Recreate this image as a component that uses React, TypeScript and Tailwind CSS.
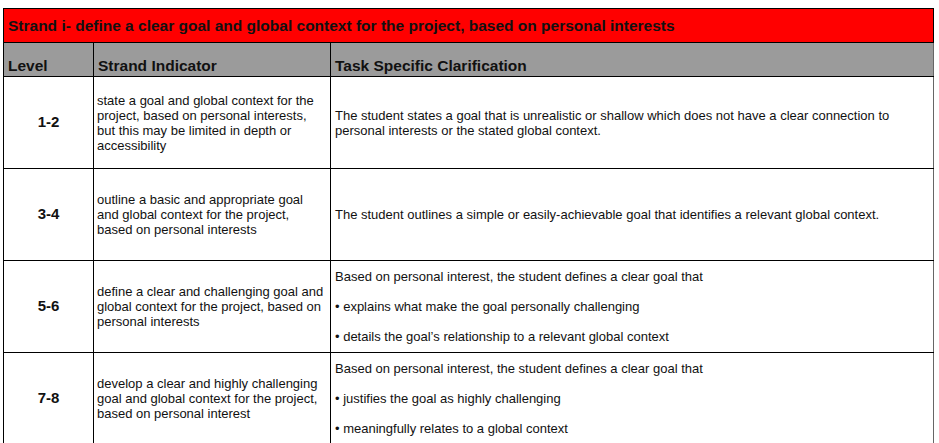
const rows = [
  {
    level: "1-2",
    indicator:
      "state a goal and global context for the project, based on personal interests, but this may be limited in depth or accessibility",
    clarification: [
      "The student states a goal that is unrealistic or shallow which does not have a clear connection to personal interests or the stated global context.",
    ],
  },
  {
    level: "3-4",
    indicator: "outline a basic and appropriate goal and global context for the project, based on personal interests",
    clarification: [
      "The student outlines a simple or easily-achievable goal that identifies a relevant global context.",
    ],
  },
  {
    level: "5-6",
    indicator: "define a clear and challenging goal and global context for the project, based on personal interests",
    clarification: [
      "Based on personal interest, the student defines a clear goal that",
      "• explains what make the goal personally challenging",
      "• details the goal’s relationship to a relevant global context",
    ],
  },
  {
    level: "7-8",
    indicator: "develop a clear and highly challenging goal and global context for the project, based on personal interest",
    clarification: [
      "Based on personal interest, the student defines a clear goal that",
      "• justifies the goal as highly challenging",
      "• meaningfully relates to a global context",
    ],
  },
];

export default function App() {
  return (
    <div className="h-[443px] w-[939px] overflow-hidden bg-white pl-[3px] pt-[8px] font-['Liberation_Sans',Arial,sans-serif] text-[#111]">
      <table className="w-[931px] table-fixed border-collapse">
        <colgroup>
          <col className="w-[90px]" />
          <col className="w-[237px]" />
          <col />
        </colgroup>
        <thead>
          <tr className="h-[34px] bg-[#ff0000]">
            <th colSpan={3} className="border border-black px-[4px] pt-[1px] text-left align-middle text-[15.5px] font-bold">
              Strand i- define a clear goal and global context for the project, based on personal interests
            </th>
          </tr>
          <tr className="h-[34px] bg-[#9b9b9b]">
            <th className="border border-black px-[4px] pb-0 text-left align-bottom text-[15.5px] font-bold leading-[20px]">Level</th>
            <th className="border border-black px-[4px] pb-0 text-left align-bottom text-[15.5px] font-bold leading-[20px]">
              Strand Indicator
            </th>
            <th className="border border-black border-r-[#666] px-[4px] pb-0 text-left align-bottom text-[15.5px] font-bold leading-[20px]">
              Task Specific Clarification
            </th>
          </tr>
        </thead>
        <tbody>
          {rows.map((r) => (
            <tr key={r.level} className="h-[92px]">
              <td className="border border-black text-center align-middle text-[15px] font-bold">{r.level}</td>
              <td className="border border-black pl-[3px] pr-[5px] align-middle text-[13px] leading-[15px]">{r.indicator}</td>
              <td className="border border-black border-r-[#666] px-[4px] align-middle text-[13px] leading-[15px]">
                <div className="flex flex-col gap-[15px]">
                  {r.clarification.map((c, i) => (
                    <p key={i}>{c}</p>
                  ))}
                </div>
              </td>
            </tr>
          ))}
        </tbody>
      </table>
    </div>
  );
}
